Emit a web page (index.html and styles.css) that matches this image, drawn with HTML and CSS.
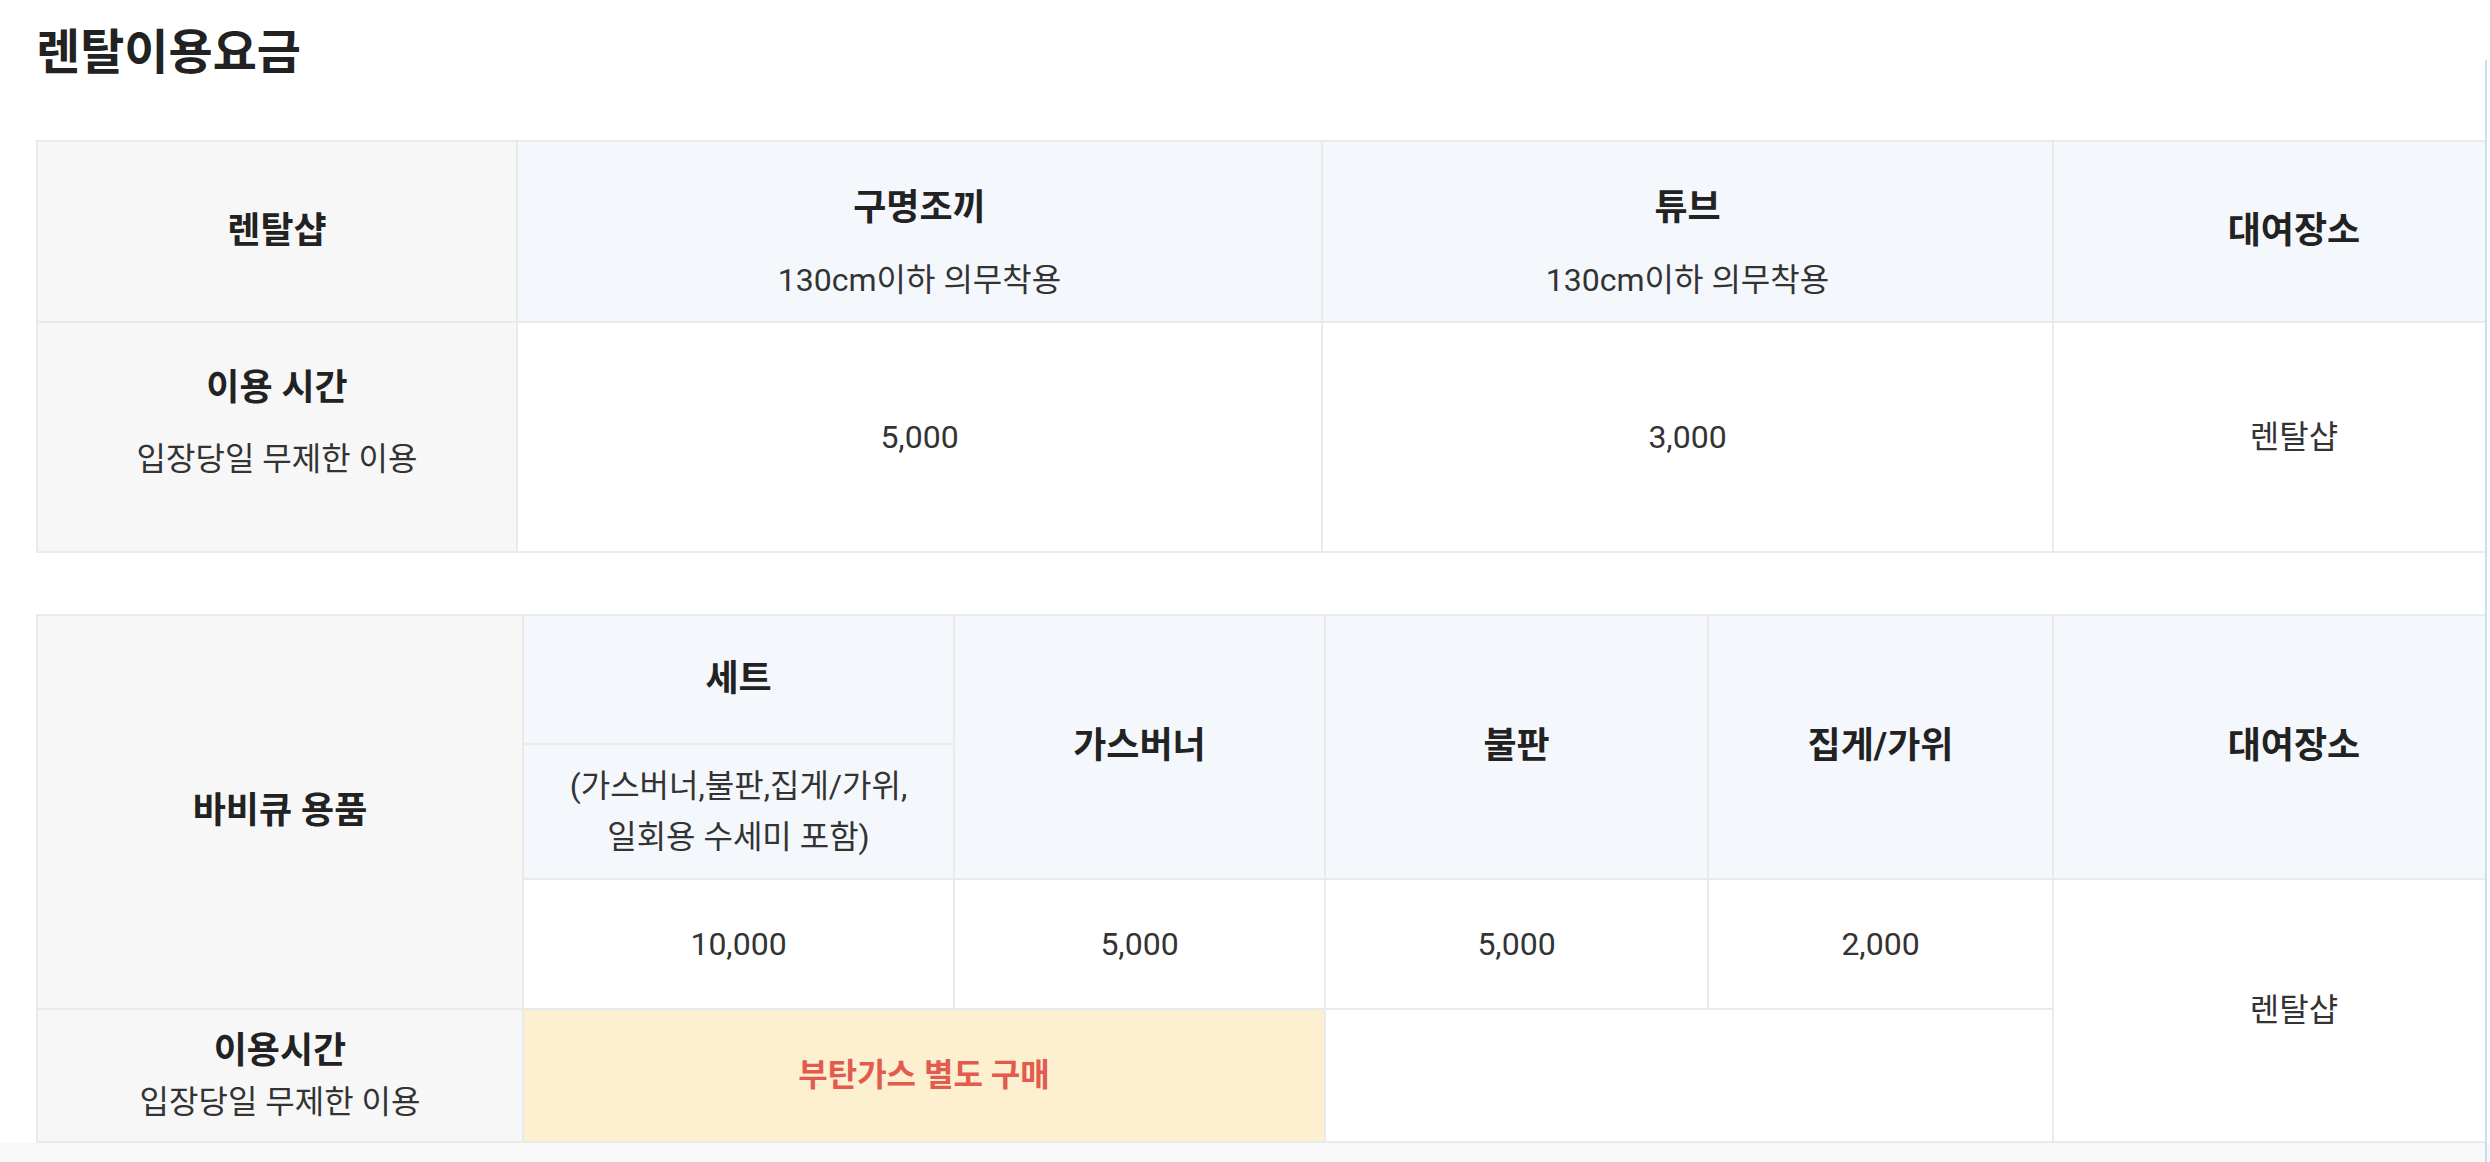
FILE: index.html
```html
<!DOCTYPE html>
<html lang="ko">
<head>
<meta charset="utf-8">
<title>렌탈이용요금</title>
<link rel="stylesheet" href="styles.css">
</head>
<body>
<div class="page">
  <h2 class="title">렌탈이용요금</h2>

  <table class="rate">
    <colgroup>
      <col class="w480"><col class="w805"><col class="w731"><col class="w482">
    </colgroup>
    <tr class="h181">
      <th class="label">렌탈샵</th>
      <th class="head two-top"><span class="b">구명조끼</span><span class="sub gap">130cm이하 의무착용</span></th>
      <th class="head two-top"><span class="b">튜브</span><span class="sub gap">130cm이하 의무착용</span></th>
      <th class="head">대여장소</th>
    </tr>
    <tr class="h230">
      <th class="label two-bottom"><span class="b">이용 시간</span><span class="sub gap">입장당일 무제한 이용</span></th>
      <td>5,000</td>
      <td>3,000</td>
      <td>렌탈샵</td>
    </tr>
  </table>

  <table class="rate rate-second">
    <colgroup>
      <col class="w486"><col class="w431"><col class="w371"><col class="w383"><col class="w345"><col class="w482">
    </colgroup>
    <tr class="h129">
      <th class="label" rowspan="3">바비큐 용품</th>
      <th class="head">세트</th>
      <th class="head" rowspan="2">가스버너</th>
      <th class="head" rowspan="2">불판</th>
      <th class="head" rowspan="2">집게/가위</th>
      <th class="head" rowspan="2">대여장소</th>
    </tr>
    <tr class="h135">
      <td class="head note">(가스버너,불판,집게/가위,<br>일회용 수세미 포함)</td>
    </tr>
    <tr class="h130">
      <td>10,000</td>
      <td>5,000</td>
      <td>5,000</td>
      <td>2,000</td>
      <td rowspan="2">렌탈샵</td>
    </tr>
    <tr class="h133">
      <th class="label compact"><span class="b">이용시간</span><span class="sub">입장당일 무제한 이용</span></th>
      <td class="notice" colspan="2">부탄가스 별도 구매</td>
      <td colspan="2"></td>
    </tr>
  </table>
</div>
<div class="footer"></div>
<div class="edge"></div>
</body>
</html>
```

FILE: styles.css
```css
html {
  background: #fff;
}

body {
  margin: 0;
  position: relative;
  font-family: Roboto, "Noto Sans CJK KR", sans-serif;
  color: #333;
}

.page {
  width: 2449px;
  overflow: hidden;
  background: #fff;
  padding: 19px 0 0 36px;
}

.footer {
  height: 40px;
  background: #f8f8f8;
}

.title {
  margin: 0 0 54px;
  font-size: 48px;
  line-height: 1.4;
  font-weight: 700;
  color: #222;
}

.rate {
  border-collapse: collapse;
  table-layout: fixed;
  width: 2498px;
  font-size: 32px;
  line-height: 1.6;
  text-align: center;
}

.rate-second {
  margin-top: 61px;
}

.rate th,
.rate td {
  border: 2px solid #eaeaea;
  padding: 0;
  vertical-align: middle;
}

.rate th {
  font-size: 36px;
  font-weight: 700;
  color: #222;
}

.rate td {
  font-weight: 400;
  color: #333;
}

.w480 { width: 480px; }
.w805 { width: 805px; }
.w731 { width: 731px; }
.w482 { width: 482px; }
.w486 { width: 486px; }
.w431 { width: 431px; }
.w371 { width: 371px; }
.w383 { width: 383px; }
.w345 { width: 345px; }

.h181 { height: 181px; }
.h230 { height: 230px; }
.h129 { height: 129px; }
.h135 { height: 135px; }
.h130 { height: 130px; }
.h133 { height: 133px; }

.label {
  background: #f7f7f7;
}

.head {
  background: #f4f8fc;
}

.b {
  display: block;
}

.sub {
  display: block;
  font-size: 32px;
  font-weight: 400;
  color: #333;
}

.sub.gap {
  margin-top: 17px;
}

.compact .b {
  line-height: 52px;
}

.compact .sub {
  line-height: 50px;
}

.two-top {
  padding-top: 23px !important;
}

.two-bottom {
  padding-bottom: 29px !important;
}

.notice {
  background: #fcf0d0;
  color: #e35a4f !important;
  font-weight: 700 !important;
}

.edge {
  position: absolute;
  left: 2485px;
  top: 60px;
  width: 2px;
  height: 1102px;
  background: #c9def2;
}
```
